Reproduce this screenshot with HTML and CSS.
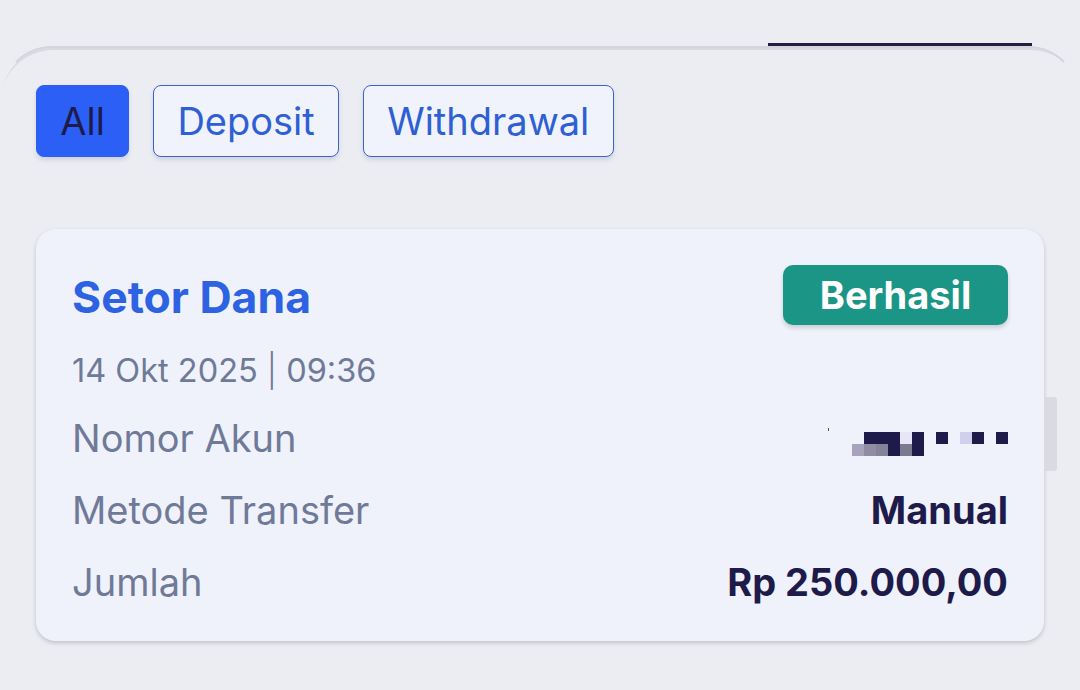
FILE: index.html
```html
<!DOCTYPE html>
<html lang="id">
<head>
    <meta charset="UTF-8">
    <meta name="viewport" content="width=device-width, initial-scale=1.0">
    <title>Riwayat Transaksi</title>
    <link rel="stylesheet" href="styles.css">
</head>
<body>
    <div class="tab-bar">
        <div class="tab-indicator"></div>
    </div>

    <div class="sheet">
        <div class="filters">
            <button class="chip active">All</button>
            <button class="chip">Deposit</button>
            <button class="chip">Withdrawal</button>
        </div>

        <div class="card">
            <div class="card-head">
                <span class="card-title">Setor Dana</span>
                <span class="badge">Berhasil</span>
            </div>
            <div class="card-date">14 Okt 2025 <span class="sep">|</span> 09:36</div>

            <div class="rows">
                <div class="row">
                    <span class="label">Nomor Akun</span>
                    <svg class="masked" width="180" height="28" viewBox="0 0 180 28">
                        <rect x="0" y="0" width="1" height="3" fill="#555"/>
                        <rect x="36" y="4" width="36" height="12" fill="#1e1b4b"/>
                        <rect x="72" y="4" width="12" height="12" fill="#e6e6f6"/>
                        <rect x="84" y="4" width="12" height="24" fill="#1e1b4b"/>
                        <rect x="24" y="16" width="12" height="12" fill="#a7a3bd"/>
                        <rect x="36" y="16" width="12" height="12" fill="#8f8ca3"/>
                        <rect x="48" y="16" width="12" height="12" fill="#85839a"/>
                        <rect x="60" y="16" width="12" height="12" fill="#1e1b4b"/>
                        <rect x="72" y="16" width="12" height="12" fill="#7b7990"/>
                        <rect x="108" y="4" width="12" height="12" fill="#1e1b4b"/>
                        <rect x="132" y="4" width="12" height="12" fill="#d0d0ec"/>
                        <rect x="144" y="4" width="12" height="12" fill="#1e1b4b"/>
                        <rect x="168" y="4" width="12" height="12" fill="#1e1b4b"/>
                    </svg>
                </div>
                <div class="row">
                    <span class="label">Metode Transfer</span>
                    <span class="value">Manual</span>
                </div>
                <div class="row">
                    <span class="label">Jumlah</span>
                    <span class="value">Rp 250.000,00</span>
                </div>
            </div>
        </div>

        <div class="scroll-thumb"></div>
    </div>
</body>
</html>
```

FILE: styles.css
```css
body {
    margin: 0;
    background-color: #ecedf3;
    font-family: Inter, "Noto Sans", sans-serif;
    color: #1e1b4b;
    overflow: hidden;
}
.tab-bar {
    height: 46px;
    position: relative;
}
.tab-indicator {
    position: absolute;
    left: 768px;
    bottom: 0;
    width: 264px;
    height: 3px;
    background: #1f1d45;
    z-index: 2;
}
.sheet {
    position: relative;
    border-top: 2px solid #d4d5dc;
    border-left: 2px solid transparent;
    border-right: 2px solid transparent;
    border-radius: 52px 52px 0 0;
    padding: 37px 34px 0;
    min-height: 600px;
    box-shadow: inset 2px 6px 0 -4px #d9dae0;
}
.filters {
    display: flex;
    gap: 24px;
}
.chip {
    height: 72px;
    padding: 0 23.25px;
    font-family: Inter, sans-serif;
    font-size: 38px;
    border: 1.5px solid #3d63c8;
    border-radius: 8px;
    background: #f0f3fb;
    color: #2f5fd4;
    box-shadow: 0 3px 4px rgba(40, 60, 120, 0.15);
}
.chip.active {
    background: #2b5ff5;
    border-color: #2b5ff5;
    color: #1e1b4b;
}
.card {
    margin-top: 72px;
    width: 1008px;
    box-sizing: border-box;
    padding: 36px 36px 23px 36px;
    background: #eff2fa;
    border-radius: 20px;
    box-shadow: 0 2px 4px rgba(0, 0, 0, 0.18);
}
.card-head {
    display: flex;
    justify-content: space-between;
    align-items: center;
    height: 60px;
}
.card-title {
    font-size: 44.5px;
    font-weight: 700;
    color: #2d62e3;
    padding-top: 3px;
}
.badge {
    width: 225px;
    height: 60px;
    line-height: 60px;
    text-align: center;
    background: #1b9585;
    color: #fff;
    font-size: 38px;
    font-weight: 700;
    border-radius: 10px;
    box-shadow: 0 3px 4px rgba(0, 0, 0, 0.15);
}
.card-date {
    margin-top: 22px;
    font-size: 32.5px;
    line-height: 48px;
    color: #6f7a98;
}
.sep {
    font-weight: 300;
}
.rows {
    margin-top: 7px;
}
.row {
    display: flex;
    justify-content: space-between;
    align-items: center;
    height: 72px;
}
.label {
    font-size: 38px;
    color: #6f7a98;
}
.value {
    font-size: 38px;
    font-weight: 700;
    color: #1e1b4b;
}
.masked {
    margin-top: 8px;
}
.scroll-thumb {
    position: absolute;
    left: 1043px;
    top: 349px;
    width: 12px;
    height: 74px;
    background: #dadbe2;
    border-radius: 0 3px 3px 0;
}
```
